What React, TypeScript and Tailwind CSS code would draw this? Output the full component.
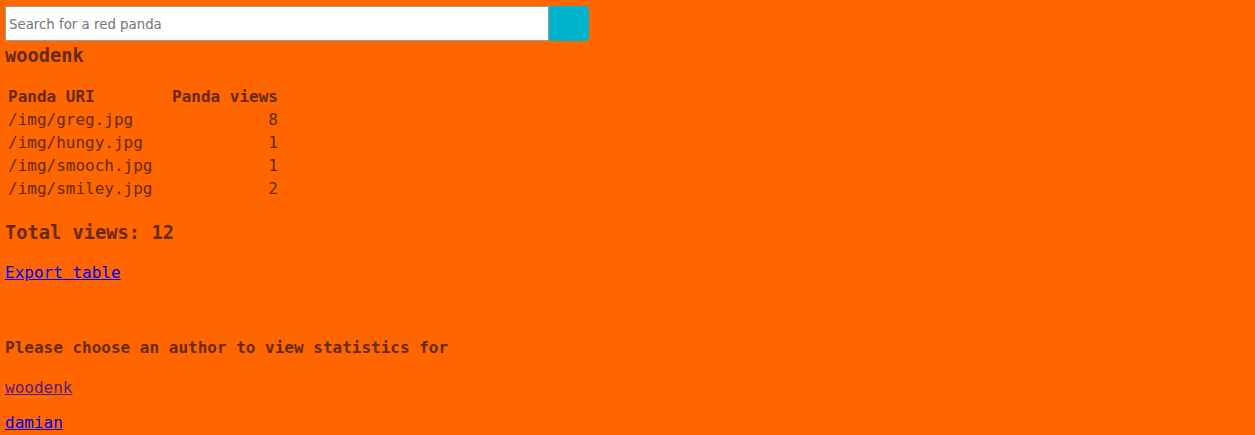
import React from "react";

const rows = [
  { uri: "/img/greg.jpg", views: 8 },
  { uri: "/img/hungy.jpg", views: 1 },
  { uri: "/img/smooch.jpg", views: 1 },
  { uri: "/img/smiley.jpg", views: 2 },
];

export default function App() {
  return (
    <div className="min-h-[435px] w-full bg-[#ff6600] px-[5px] pt-[6px] text-[16px] leading-[normal] text-[#662900] [font-family:'DejaVu_Sans_Mono',monospace]">
      <div className="flex">
        <input
          type="text"
          placeholder="Search for a red panda"
          className="h-[35px] w-[544px] border border-[#9a9a9a] bg-white px-[3px] pt-[2px] text-[13.33px] text-black placeholder:text-[#757575] outline-none [font-family:'DejaVu_Sans',sans-serif]"
        />
        <button className="h-[35px] w-[40px] rounded-r-[4px] bg-[#00b4cc]" aria-label="Search" />
      </div>
      <h3 className="mt-[4px] text-[18.72px] font-bold leading-[normal]">woodenk</h3>
      <table className="mt-[18px] border-separate border-spacing-[2px]">
        <thead>
          <tr>
            <th className="w-[162px] p-[1px] text-left font-bold">Panda URI</th>
            <th className="p-[1px] text-left font-bold">Panda views</th>
          </tr>
        </thead>
        <tbody>
          {rows.map((r) => (
            <tr key={r.uri}>
              <td className="p-[1px]">{r.uri}</td>
              <td className="p-[1px] text-right">{r.views}</td>
            </tr>
          ))}
        </tbody>
      </table>
      <h3 className="mt-[21px] text-[18.72px] font-bold leading-[normal]">Total views: 12</h3>
      <div className="mt-[20px]">
        <a href="#" className="text-[#0000ee] underline">Export table</a>
      </div>
      <h4 className="mt-[56px] font-bold">Please choose an author to view statistics for</h4>
      <div className="mt-[21px]">
        <a href="#" className="text-[#551a8b] underline">woodenk</a>
      </div>
      <div className="mt-[16px]">
        <a href="#" className="text-[#0000ee] underline">damian</a>
      </div>
    </div>
  );
}
